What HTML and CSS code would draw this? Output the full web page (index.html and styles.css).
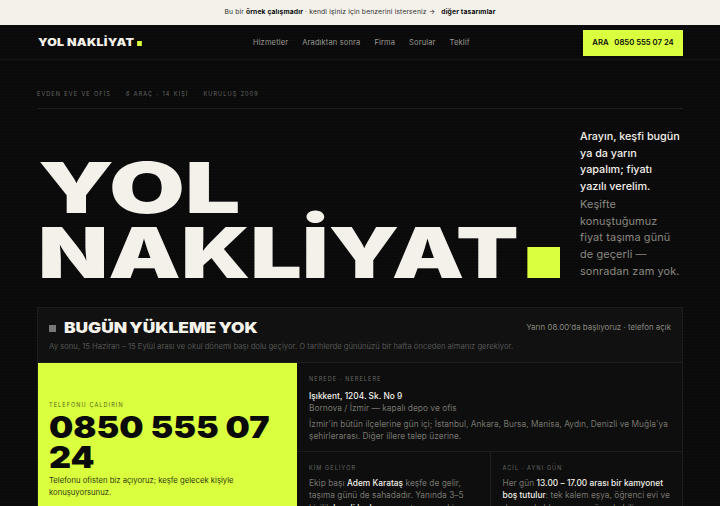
FILE: index.html
```html
<!DOCTYPE html>
<html lang="tr">
<head>
  <meta charset="UTF-8" />
  <meta name="viewport" content="width=device-width, initial-scale=1"/>
  <title>Yol Nakliyat</title>
  <link rel="stylesheet" href="styles.css">
</head>
<body>
  <div class="topbar">
    <span>Bu bir <b>örnek çalışmadır</b> · kendi işiniz için benzerini isterseniz →</span>
    <a href="#"><b>diğer tasarımlar</b></a>
  </div>

  <header class="nav">
    <a class="logo" href="#">YOL NAKLİYAT<i class="dot"></i></a>
    <nav class="nav-links">
      <a href="#">Hizmetler</a>
      <a href="#">Aradıktan sonra</a>
      <a href="#">Firma</a>
      <a href="#">Sorular</a>
      <a href="#">Teklif</a>
    </nav>
    <a class="nav-call" href="#">ARA&nbsp;&nbsp; 0850 555 07 24</a>
  </header>

  <main class="page">
    <div class="meta">
      <span>EVDEN EVE VE OFİS</span>
      <span>6 ARAÇ · 14 KİŞİ</span>
      <span>KURULUŞ 2009</span>
    </div>

    <section class="hero">
      <h1 class="hero-title">
        <span class="hero-line hero-line-short">YOL</span>
        <span class="hero-line">NAKLİYAT<i class="hero-dot"></i></span>
      </h1>
      <p class="hero-text"><strong>Arayın, keşfi bugün ya da yarın yapalım; fiyatı yazılı verelim.</strong> Keşifte konuştuğumuz fiyat taşıma günü de geçerli — sonradan zam yok.</p>
    </section>

    <section class="panel">
      <div class="status">
        <div class="status-top">
          <div class="status-head">
            <i class="status-dot"></i>
            <h2 class="status-title">BUGÜN YÜKLEME YOK</h2>
          </div>
          <span class="status-next">Yarın 08.00'da başlıyoruz · telefon açık</span>
        </div>
        <p class="status-note">Ay sonu, 15 Haziran – 15 Eylül arası ve okul dönemi başı dolu geçiyor. O tarihlerde gününüzü bir hafta önceden almanız gerekiyor.</p>
      </div>

      <div class="panel-grid">
        <div class="call">
          <div class="label">TELEFONU ÇALDIRIN</div>
          <div class="call-number">0850 555 07 24</div>
          <p class="call-note">Telefonu ofisten biz açıyoruz; keşfe gelecek kişiyle konuşuyorsunuz.</p>
        </div>

        <div class="info">
          <div class="info-where">
            <div class="label">NEREDE · NERELERE</div>
            <p class="addr"><strong>Işıkkent, 1204. Sk. No 9</strong><br>Bornova / İzmir — kapalı depo ve ofis</p>
            <p>İzmir'in bütün ilçelerine gün içi; İstanbul, Ankara, Bursa, Manisa, Aydın, Denizli ve Muğla'ya şehirlerarası. Diğer illere talep üzerine.</p>
          </div>
          <div class="info-cols">
            <div class="info-col">
              <div class="label">KİM GELİYOR</div>
              <p>Ekip başı <strong>Adem Karataş</strong> keşfe de gelir, taşıma günü de sahadadır. Yanında 3–5 kişilik <strong>kendi kadromuz</strong> — taşeron ekip göndermiyoruz.</p>
            </div>
            <div class="info-col">
              <div class="label">ACİL · AYNI GÜN</div>
              <p>Her gün <strong>13.00 – 17.00 arası bir kamyonet boş tutulur</strong>: tek kalem eşya, öğrenci evi ve depoya kaldırma aynı gün çıkabilir.</p>
            </div>
          </div>
        </div>
      </div>
    </section>
  </main>
</body>
</html>
```

FILE: styles.css
```css
/* reset */
*, *::before, *::after { box-sizing: border-box; margin: 0; padding: 0; }
html, body { height: 506px; overflow: hidden; }
body {
  font-family: 'Inter', 'Noto Sans', sans-serif;
  background-color: #0a0a0a;
  background-image: repeating-linear-gradient(0deg, rgba(255,255,255,0.012) 0 1px, transparent 1px 3px);
  color: #f4f1ea;
  line-height: 1.5;
}
a { color: inherit; text-decoration: none; }
i { display: inline-block; }
strong { font-weight: 500; color: #f4f1ea; }

/* top strip */
.topbar {
  height: 25px;
  background: #f4f1ea;
  color: #333;
  font-size: 6.75px;
  letter-spacing: 0.02em;
  display: flex;
  align-items: center;
  justify-content: center;
  gap: 6px;
}
.topbar b { color: #0a0a0a; font-weight: 700; }

/* header */
.nav {
  height: 35px;
  padding: 0 37px;
  display: flex;
  align-items: center;
  justify-content: space-between;
  border-bottom: 1px solid #161616;
}
.logo {
  font-weight: 900;
  font-size: 10.5px;
  letter-spacing: 0.02em;
  transform: scaleX(1.18);
  transform-origin: left center;
  display: block;
  margin: 2px 0 0 1px;
}
.dot { width: 4px; height: 5px; background: #d9ff3f; margin-left: 2px; }
.nav-links { display: flex; gap: 14px; font-size: 7.5px; color: #9a9994; letter-spacing: 0.02em; margin: 2px 0 0 14px; }
.nav-call {
  align-self: flex-start;
  margin-top: 5px;
  width: 100px;
  height: 26px;
  background: #d9ff3f;
  color: #0a0a0a;
  font-size: 7.7px;
  font-weight: 600;
  display: flex;
  align-items: center;
  justify-content: center;
  white-space: nowrap;
}

/* page */
.page { padding: 0 37px; }
.meta {
  padding-top: 30px;
  height: 49px;
  border-bottom: 1px solid #1d1d1c;
  display: flex;
  gap: 15px;
  font-size: 5.5px;
  letter-spacing: 0.2em;
  word-spacing: 0.7px;
  color: #666;
}

/* hero */
.hero { display: flex; justify-content: space-between; height: 198px; }
.hero-title {
  margin: 46px 0 0 1px;
  font-size: 70px;
  line-height: 65px;
  font-weight: 900;
  white-space: nowrap;
}
.hero-line { display: block; transform: scaleX(1.305); transform-origin: left top; }
.hero-line-short { transform: scaleX(1.4); }
.hero-dot { width: 24.5px; height: 31px; background: #d9ff3f; margin-left: 7px; }
.hero-text {
  width: 101px;
  margin-top: 20px;
  margin-right: 2px;
  font-size: 10.9px;
  line-height: 16.7px;
  letter-spacing: 0.12px;
  color: #8a8880;
}
.hero-text strong { display: block; font-size: 10.8px; letter-spacing: 0; }

/* panel */
.panel { border: 1px solid #1d1d1c; background: #0d0e0d; }
.status { height: 55px; padding: 10px 11px 0; border-bottom: 1px solid #1d1d1c; background: #101110; }
.status-top { display: flex; justify-content: space-between; align-items: center; }
.status-head { display: flex; align-items: center; gap: 8px; }
.status-dot { width: 7px; height: 7px; background: #777; }
.status-title {
  font-size: 14px;
  font-weight: 900;
  line-height: 20px;
  word-spacing: -1px;
  white-space: nowrap;
  transform: scaleX(1.24);
  transform-origin: left center;
}
.status-next { font-size: 7.9px; color: #8a8880; }
.status-note { font-size: 7.65px; color: #555; margin-top: 3px; white-space: nowrap; }

.panel-grid { display: grid; grid-template-columns: 259px 1fr; }
.label { font-size: 5.5px; letter-spacing: 0.2em; color: #666; }

.call { background: #d9ff3f; color: #0a0a0a; padding: 38px 11px 0; height: 200px; }
.call .label { color: #555f1c; }
.call-number {
  font-size: 30px;
  line-height: 30px;
  font-weight: 900;
  margin-top: 3px;
  transform: scaleX(1.14);
  transform-origin: left top;
}
.call-note { font-size: 7.7px; line-height: 11.4px; color: #333a10; margin-top: 3px; }

.info { font-size: 8.3px; line-height: 12.2px; letter-spacing: 0.04px; color: #77756f; }
.info-where { padding: 10px 11px 9px 12px; border-bottom: 1px solid #1d1d1c; }
.info-where p { margin-top: 3px; }
.info-where .addr { margin-top: 5px; }
.info-cols { display: grid; grid-template-columns: 1fr 1fr; }
.info-col { padding: 10px 11px 10px 12px; }
.info-col + .info-col { border-left: 1px solid #1d1d1c; }
.info-col p { margin-top: 3px; }
```
